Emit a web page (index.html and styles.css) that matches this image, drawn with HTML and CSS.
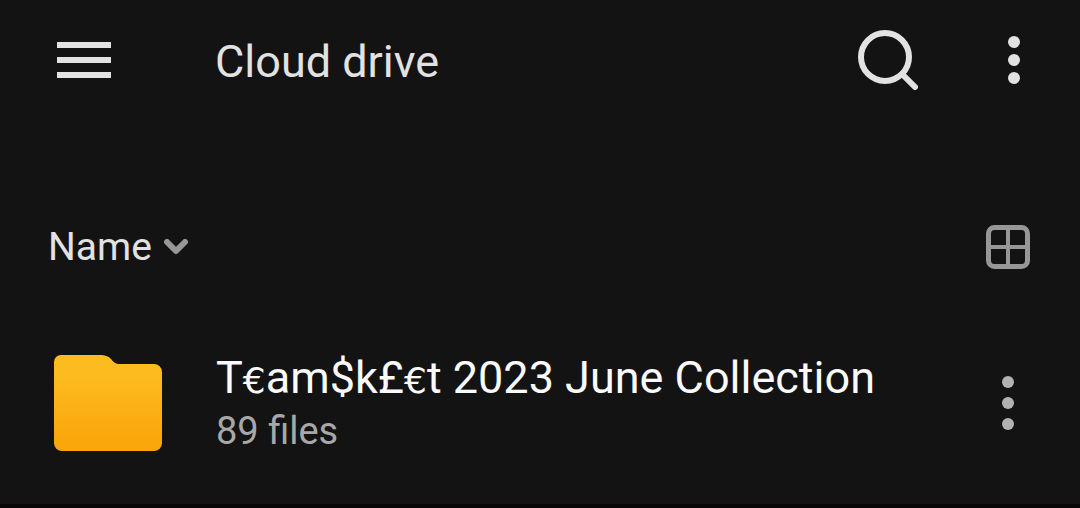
FILE: index.html
```html
<!DOCTYPE html>
<html lang="en">
<head>
<meta charset="utf-8">
<meta name="viewport" content="width=device-width, initial-scale=1">
<title>Cloud drive</title>
<link rel="stylesheet" href="styles.css">
</head>
<body>
<header class="app-bar">
  <button class="icon-button" type="button" aria-label="Open menu">
    <svg width="54" height="36" viewBox="0 0 54 36" fill="currentColor"><path d="M0 0h54v6H0zM0 15h54v6H0zM0 30h54v6H0z"/></svg>
  </button>
  <h1 class="app-title">Cloud drive</h1>
  <button class="icon-button" type="button" aria-label="Search">
    <svg width="60" height="60" viewBox="0 0 60 60" fill="none" stroke="currentColor" stroke-width="6" stroke-linecap="round"><circle cx="27" cy="27" r="24"/><path d="M45 45l12 12"/></svg>
  </button>
  <button class="icon-button" type="button" aria-label="More options">
    <svg width="12" height="48" viewBox="0 0 12 48" fill="currentColor"><circle cx="6" cy="6" r="6"/><circle cx="6" cy="24" r="6"/><circle cx="6" cy="42" r="6"/></svg>
  </button>
</header>
<main>
  <div class="sort-bar">
    <button class="sort-button" type="button">Name
      <svg class="muted" width="24" height="16" viewBox="0 0 24 16" fill="none" stroke="currentColor" stroke-width="6" stroke-linecap="round" stroke-linejoin="round"><path d="M3 3l9 9 9-9"/></svg>
    </button>
    <button class="icon-button muted" type="button" aria-label="Grid view">
      <svg width="44" height="44" viewBox="0 0 44 44" fill="none" stroke="currentColor" stroke-width="5"><rect x="2.5" y="2.5" width="39" height="39" rx="6"/><path stroke-width="4" d="M22 2v40M2 22h40"/></svg>
    </button>
  </div>
  <ul class="file-list">
    <li class="file-row">
      <svg class="folder" width="108" height="96" viewBox="0 0 108 96" aria-hidden="true">
        <defs><linearGradient id="folder-fill" x1="0" y1="0" x2="0" y2="1"><stop offset=".2" stop-color="#fcbc20"/><stop offset=".85" stop-color="#faa70c"/></linearGradient></defs>
        <path fill="url(#folder-fill)" d="M7 0h40c4 0 7 1 10 4 3 4 5 5 9 5h34a8 8 0 0 1 8 8v71a8 8 0 0 1-8 8H8a8 8 0 0 1-8-8V7a7 7 0 0 1 7-7z"/>
      </svg>
      <div class="file-text">
        <h2 class="file-name">T<span class="small-sign">€</span>am$k£<span class="small-sign">€</span>t 2023 June Collection</h2>
        <p class="file-meta">89 files</p>
      </div>
      <button class="icon-button row-menu" type="button" aria-label="Folder options">
        <svg width="12" height="54" viewBox="0 0 12 54" fill="currentColor"><circle cx="6" cy="6" r="6"/><circle cx="6" cy="27" r="6"/><circle cx="6" cy="48" r="6"/></svg>
      </button>
    </li>
  </ul>
</main>
</body>
</html>
```
FILE: styles.css
```css
* { box-sizing: border-box; }
body {
  margin: 0;
  background: #131313;
  color: #e2e2e2;
  font-family: Roboto, "Liberation Sans", sans-serif;
}
button {
  padding: 0;
  border: 0;
  background: none;
  color: inherit;
  font: inherit;
}
svg { display: block; flex: none; }
h1, h2, p, ul { margin: 0; padding: 0; font-weight: 400; }
.icon-button { flex: none; }
.app-bar {
  display: flex;
  align-items: center;
  height: 120px;
  padding: 0 60px 0 57px;
}
.app-title {
  flex: 1;
  padding: 4px 0 0 104px;
  font-size: 45px;
  line-height: 56px;
}
.app-bar .icon-button:last-child { margin-left: 90px; }
.sort-bar {
  display: flex;
  align-items: center;
  justify-content: space-between;
  padding: 97px 50px 0 48px;
}
.sort-button {
  display: flex;
  align-items: center;
  gap: 12px;
  font-size: 39px;
  line-height: 60px;
}
.muted { color: #979797; }
.file-list { list-style: none; }
.file-row {
  display: flex;
  align-items: center;
  padding: 73px 66px 48px 54px;
  border-bottom: 4px solid #080607;
}
.file-text {
  flex: 1;
  min-width: 0;
  padding-left: 54px;
}
.file-name {
  color: #fafafa;
  font-size: 45px;
  line-height: 56px;
}
.small-sign {
  font-family: "DejaVu Sans", sans-serif;
  font-size: 36px;
  line-height: 1;
}
.file-meta {
  color: #a8a8a8;
  font-size: 38px;
  line-height: 50px;
}
.row-menu { color: #b2b2b2; }
```
